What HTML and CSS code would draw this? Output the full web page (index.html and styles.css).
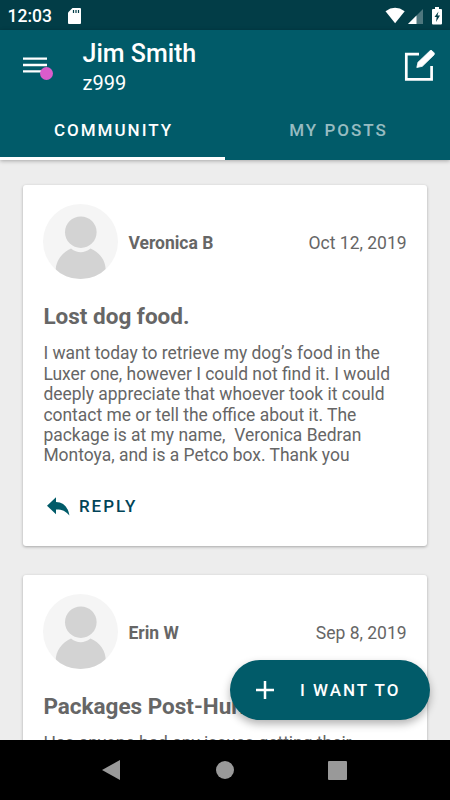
FILE: index.html
```html
<!DOCTYPE html>
<html lang="en">
<head>
    <meta charset="UTF-8">
    <meta name="viewport" content="width=device-width, initial-scale=1.0">
    <title>Community</title>
    <link rel="stylesheet" href="styles.css">
</head>
<body>
    <!-- Shared avatar -->
    <svg class="sprite" width="0" height="0">
        <symbol id="avatar" viewBox="0 0 75 75">
            <clipPath id="avatarClip"><circle cx="37.5" cy="37.5" r="37.5"/></clipPath>
            <circle cx="37.5" cy="37.5" r="37.5" fill="#f5f5f5"/>
            <g clip-path="url(#avatarClip)" fill="#d3d3d3">
                <circle cx="37.8" cy="28.2" r="15.8"/>
                <path d="M28 44.5Q37.5 52 47.5 44.5C57 48.500 63 57 62.700 67V75H12.700V67C12.500 57 19 48.500 28 44.500Z"/>
            </g>
        </symbol>
    </svg>

    <div class="screen">
        <div class="status-bar">
            <span class="clock">12:03</span>
            <svg class="sd-card" width="13" height="16" viewBox="0 0 13 16">
                <path d="M4.500 0H12A1 1 0 0 1 13 1V15A1 1 0 0 1 12 16H1A1 1 0 0 1 0 15V4.500Z" fill="#fff"/>
                <path d="M5.500 2V5M8 2V5M10.500 2V5" stroke="#023d47" stroke-width="1.200"/>
            </svg>
            <svg class="status-icons" width="58" height="18" viewBox="0 0 58 18">
                <path d="M0.500 4.200Q10 -2.700 19.700 4.200L10.100 16.200Z" fill="#fff"/>
                <path d="M38 2V17H23Z" fill="#fff" fill-opacity="0.300"/>
                <path d="M31.500 8.500V17H23Z" fill="#fff"/>
                <path d="M49 2H50V0H54V2H56A1 1 0 0 1 57 3V16.500A1 1 0 0 1 56 17.500H48A1 1 0 0 1 47 16.500V3A1 1 0 0 1 48 2Z" fill="#fff"/>
                <path d="M53.500 4.500L49.500 10H51.700L51 15L55 8.500H52.500Z" fill="#023d47"/>
            </svg>
        </div>

        <header class="header">
            <div class="toolbar">
                <button class="menu-button" aria-label="Menu">
                    <svg width="24" height="17" viewBox="0 0 24 17">
                        <path d="M0 1.700H24M0 8H24M0 14.300H24" stroke="#fff" stroke-width="2.300"/>
                    </svg>
                    <span class="badge"></span>
                </button>
                <div class="user">
                    <h1>Jim Smith</h1>
                    <p>z999</p>
                </div>
                <button class="compose-button" aria-label="New post">
                    <svg width="32" height="32" viewBox="0 0 32 32">
                        <path d="M15 5.200H2.300V30.300H27.600V17" fill="none" stroke="#fff" stroke-width="2.700"/>
                        <path d="M12.800 18.500L14 13.300L26 1.800Q27 0.900 28 1.800L30 3.800Q30.900 4.900 30 5.900L18.300 17.300Z" fill="#fff" stroke="#fff" stroke-width="0.800"/>
                    </svg>
                </button>
            </div>
            <nav class="tabs">
                <a class="tab active">COMMUNITY</a>
                <a class="tab">MY POSTS</a>
            </nav>
        </header>

        <main class="feed">
            <article class="card">
                <div class="card-header">
                    <svg class="avatar"><use href="#avatar"/></svg>
                    <span class="author">Veronica B</span>
                    <span class="date">Oct 12, 2019</span>
                </div>
                <h2>Lost dog food.</h2>
                <p class="message">I want today to retrieve my dog’s food in the<br>Luxer one, however I could not find it. I would<br>deeply appreciate that whoever took it could<br>contact me or tell the office about it. The<br>package is at my name, &nbsp;Veronica Bedran<br>Montoya, and is a Petco box. Thank you</p>
                <button class="reply">
                    <svg width="23" height="19" viewBox="0 0 23 19">
                        <path d="M0 8.700L9 0.300V5C16 5.300 21 9.500 22.400 18.500C18.500 13.700 15 12.300 9 12.400V17.300Z" fill="#015b69"/>
                    </svg>
                    REPLY
                </button>
            </article>

            <article class="card">
                <div class="card-header">
                    <svg class="avatar"><use href="#avatar"/></svg>
                    <span class="author">Erin W</span>
                    <span class="date">Sep 8, 2019</span>
                </div>
                <h2>Packages Post-Hurricane</h2>
                <p class="message">Has anyone had any issues getting their</p>
            </article>
        </main>

        <button class="fab">
            <svg width="18" height="18" viewBox="0 0 18 18">
                <path d="M9 0V18M0 9H18" stroke="#fff" stroke-width="2.500"/>
            </svg>
            I WANT TO
        </button>

        <div class="nav-bar">
            <svg width="18" height="20" viewBox="0 0 18 20"><path d="M0 10L18 0V20Z" fill="#999"/></svg>
            <svg width="18" height="18" viewBox="0 0 18 18"><circle cx="9" cy="9" r="9" fill="#999"/></svg>
            <svg width="19" height="19" viewBox="0 0 19 19"><rect width="19" height="19" rx="1" fill="#999"/></svg>
        </div>
    </div>
</body>
</html>
```
FILE: styles.css
```css
:root {
    --primary-color: #015b69;
    --primary-dark: #023d47;
    --background-color: #ededed;
    --text-color: #666;
}

* {
    margin: 0;
    padding: 0;
    box-sizing: border-box;
}

body {
    font-family: Roboto, sans-serif;
    color: var(--text-color);
    background: #000;
}

button {
    border: none;
    background: none;
    font-family: inherit;
}

svg {
    display: block;
    flex: none;
}

.sprite {
    position: absolute;
}

.screen {
    position: relative;
    display: flex;
    flex-direction: column;
    width: 450px;
    height: 800px;
    overflow: hidden;
}

.status-bar {
    display: flex;
    align-items: center;
    height: 30px;
    padding: 1px 7px 0 7.500px;
    background: var(--primary-dark);
    color: #fff;
}

.clock {
    width: 60.500px;
    font-size: 17.500px;
    font-weight: 500;
}

.status-icons {
    margin-left: auto;
}

.header {
    height: 130px;
    background: var(--primary-color);
    color: #fff;
    box-shadow: 0 1px 4px rgba(0, 0, 0, 0.3);
    z-index: 1;
}

.toolbar {
    display: flex;
    height: 72px;
    padding: 0 14px 0 23px;
}

.menu-button {
    position: relative;
    align-self: flex-start;
    width: 59.500px;
    padding-top: 27px;
}

.badge {
    position: absolute;
    left: 17px;
    top: 37px;
    width: 13px;
    height: 13px;
    border-radius: 50%;
    background: #da5ccb;
}

.user {
    flex: 1;
    padding-top: 9px;
}

.user h1 {
    font-size: 25px;
    font-weight: 500;
    line-height: 29px;
}

.user p {
    font-size: 20px;
    line-height: 30px;
}

.compose-button {
    align-self: flex-start;
    padding-top: 19px;
}

.tabs {
    display: flex;
    height: 58px;
}

.tab {
    flex: 1;
    padding-left: 2px;
    border-bottom: 3px solid transparent;
    font-size: 17px;
    font-weight: 500;
    letter-spacing: 2px;
    line-height: 57px;
    text-align: center;
    color: rgba(255, 255, 255, 0.6);
}

.tab.active {
    border-color: #fff;
    color: #fff;
}

.feed {
    flex: 1;
    min-height: 0;
    padding: 24.500px 23.400px 0;
    overflow: hidden;
    background: var(--background-color);
}

.card {
    height: 361.500px;
    margin-bottom: 28.500px;
    padding: 19.900px 20px 0;
    border-radius: 3px;
    background: #fff;
    box-shadow: 0 1px 3px rgba(0, 0, 0, 0.3);
}

.card-header {
    display: flex;
    align-items: center;
}

.avatar {
    width: 75px;
    height: 75px;
}

.author {
    margin: 2px 0 0 10px;
    font-size: 17.500px;
    font-weight: 700;
}

.date {
    margin: 2px 0 0 auto;
    font-size: 17.500px;
}

.card h2 {
    margin-top: 20.700px;
    font-size: 22.500px;
    font-weight: 700;
    line-height: 32px;
    white-space: nowrap;
}

.message {
    margin-top: 11.300px;
    font-size: 17.450px;
    line-height: 20.400px;
    white-space: nowrap;
}

.reply {
    display: flex;
    align-items: center;
    gap: 9px;
    margin: 30.500px 0 0 3.500px;
    font-size: 17px;
    font-weight: 500;
    letter-spacing: 2px;
    color: #014458;
}

.fab {
    position: absolute;
    left: 230px;
    top: 660px;
    z-index: 2;
    display: flex;
    align-items: center;
    gap: 26px;
    width: 200px;
    height: 60px;
    padding: 0 26px;
    border-radius: 30px;
    background: var(--primary-color);
    box-shadow: 0 4px 8px rgba(0, 0, 0, 0.3);
    font-size: 17px;
    font-weight: 500;
    letter-spacing: 2px;
    white-space: nowrap;
    color: #fff;
}

.nav-bar {
    display: flex;
    align-items: center;
    justify-content: space-between;
    height: 60px;
    padding: 0 103px 0 102px;
    background: #000;
    z-index: 3;
}

.nav-bar svg:nth-child(2) {
    margin-left: 2px;
}
```
